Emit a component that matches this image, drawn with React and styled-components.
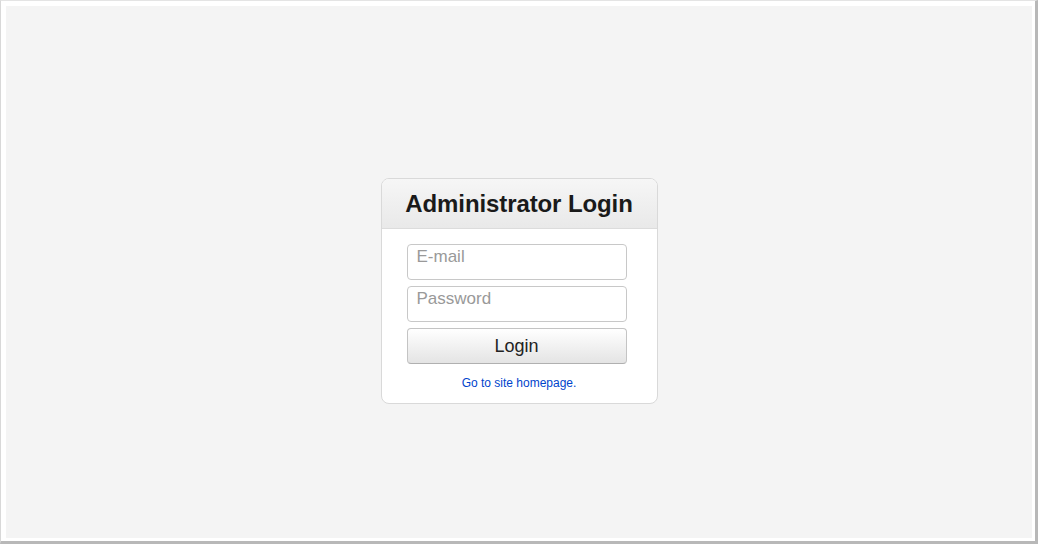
import React from "react";
import styled, { createGlobalStyle } from "styled-components";

const GlobalStyle = createGlobalStyle`
    html, body {
        margin: 0;
        padding: 0;
        background: #ffffff;
    }
    * {
        box-sizing: border-box;
    }
`;

const Window = styled.div`
    width: 1038px;
    height: 544px;
    background: #ffffff;
    border-left: 1px solid #d8d8d8;
    border-top: 1px solid #e4e4e4;
    border-right: 3px solid #b8b8b8;
    border-bottom: 3px solid #b8b8b8;
    padding: 5px 3px 3px 5px;
`;

const Page = styled.div`
    width: 100%;
    height: 100%;
    padding-top: 38px;
    background: #f4f4f4;
    display: flex;
    align-items: center;
    justify-content: center;
    font-family: "Liberation Sans", Arial, sans-serif;
`;

const Card = styled.div`
    width: 277px;
    background: #ffffff;
    border: 1px solid #d9d9d9;
    border-radius: 8px;
    overflow: hidden;
`;

const Header = styled.div`
    height: 50px;
    display: flex;
    align-items: center;
    justify-content: center;
    background: linear-gradient(#f6f6f6, #e9e9e9);
    border-bottom: 1px solid #dcdcdc;
`;

const Title = styled.h1`
    margin: 0;
    font-size: 24px;
    font-weight: bold;
    color: #1a1a1a;
    letter-spacing: -0.1px;
`;

const Form = styled.form`
    display: flex;
    flex-direction: column;
    align-items: flex-start;
    gap: 6px;
    padding: 15px 0 13px 25px;
`;

const Input = styled.input`
    width: 220px;
    height: 36px;
    border: 1px solid #c8c8c8;
    border-radius: 4px;
    padding: 0 9px 10px;
    font-family: "Liberation Sans", Arial, sans-serif;
    font-size: 17px;
    color: #333;
    outline: none;
    &::placeholder {
        color: #999999;
    }
`;

const Button = styled.button`
    width: 220px;
    height: 36px;
    border: 1px solid #c4c4c4;
    border-bottom-color: #b0b0b0;
    border-radius: 4px;
    background: linear-gradient(#ffffff, #e4e4e4);
    font-family: "Liberation Sans", Arial, sans-serif;
    font-size: 18px;
    color: #222222;
    padding: 0;
`;

const Footer = styled.p`
    width: 225px;
    margin: 6px 0 0;
    text-align: center;
    font-size: 12px;
    color: #0044cc;
`;

const HomeLink = styled.a`
    color: #0044cc;
    text-decoration: none;
`;

const App = function () {
    return (
        <>
            <GlobalStyle />
            <Window>
                <Page>
                    <Card>
                        <Header>
                            <Title>Administrator Login</Title>
                        </Header>
                        <Form onSubmit={(e) => e.preventDefault()}>
                            <Input type="email" placeholder="E-mail" />
                            <Input type="password" placeholder="Password" />
                            <Button type="submit">Login</Button>
                            <Footer>
                                <HomeLink href="#">Go to site homepage</HomeLink>.
                            </Footer>
                        </Form>
                    </Card>
                </Page>
            </Window>
        </>
    );
};

export default App;
